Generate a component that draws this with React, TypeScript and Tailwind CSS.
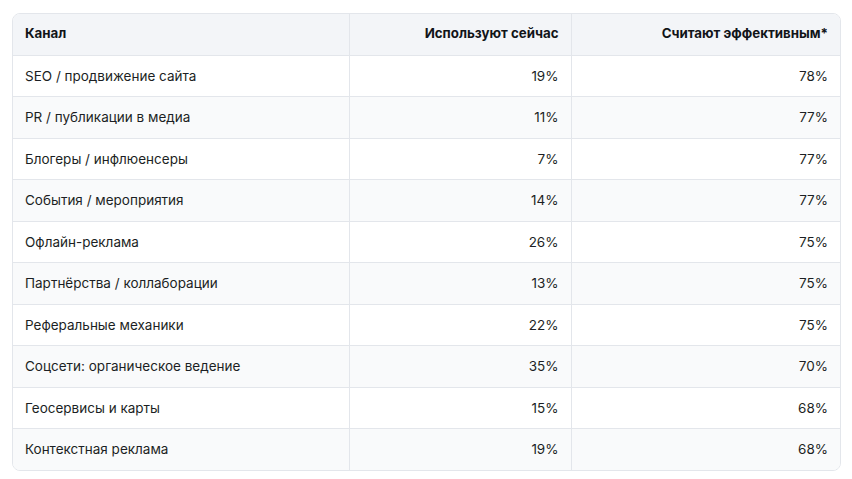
import React from "react";

interface ChannelRow {
  name: string;
  usingNow: string;
  effective: string;
}

const rows: ChannelRow[] = [
  { name: "SEO / продвижение сайта", usingNow: "19%", effective: "78%" },
  { name: "PR / публикации в медиа", usingNow: "11%", effective: "77%" },
  { name: "Блогеры / инфлюенсеры", usingNow: "7%", effective: "77%" },
  { name: "События / мероприятия", usingNow: "14%", effective: "77%" },
  { name: "Офлайн-реклама", usingNow: "26%", effective: "75%" },
  { name: "Партнёрства / коллаборации", usingNow: "13%", effective: "75%" },
  { name: "Реферальные механики", usingNow: "22%", effective: "75%" },
  { name: "Соцсети: органическое ведение", usingNow: "35%", effective: "70%" },
  { name: "Геосервисы и карты", usingNow: "15%", effective: "68%" },
  { name: "Контекстная реклама", usingNow: "19%", effective: "68%" },
];

const App: React.FC = () => {
  return (
    <div className="w-[852px] h-[479px] bg-white pt-[13px] pl-[12px] font-['Inter','Noto_Sans',sans-serif]">
      <div className="w-[829px] rounded-lg border border-[#e3e6eb] overflow-hidden">
        <table className="w-full border-collapse table-fixed text-[13.5px] text-[#1c1f24]">
          <colgroup>
            <col className="w-[336px]" />
            <col className="w-[222px]" />
            <col />
          </colgroup>
          <thead>
            {/* Header */}
            <tr className="bg-[#f3f5f8] border-b border-[#e3e6eb]">
              <th className="h-[41px] px-3 text-left text-[13.3px] font-bold text-[#111418]">Канал</th>
              <th className="h-[41px] px-3 text-right text-[13.3px] font-bold text-[#111418] border-l border-[#e3e6eb]">
                Используют сейчас
              </th>
              <th className="h-[41px] px-3 text-right text-[13.3px] font-bold text-[#111418] border-l border-[#e3e6eb]">
                Считают эффективным*
              </th>
            </tr>
          </thead>
          <tbody>
            {rows.map((row, index) => (
              <tr
                key={index}
                className={`${index % 2 === 1 ? "bg-[#f9fafb]" : "bg-white"} ${
                  index < rows.length - 1 ? "border-b border-[#e3e6eb]" : ""
                }`}
              >
                <td className="h-[41.5px] px-3">{row.name}</td>
                <td className="h-[41.5px] px-3 text-right border-l border-[#e3e6eb]">{row.usingNow}</td>
                <td className="h-[41.5px] px-3 text-right border-l border-[#e3e6eb]">{row.effective}</td>
              </tr>
            ))}
          </tbody>
        </table>
      </div>
    </div>
  );
};

export default App;
